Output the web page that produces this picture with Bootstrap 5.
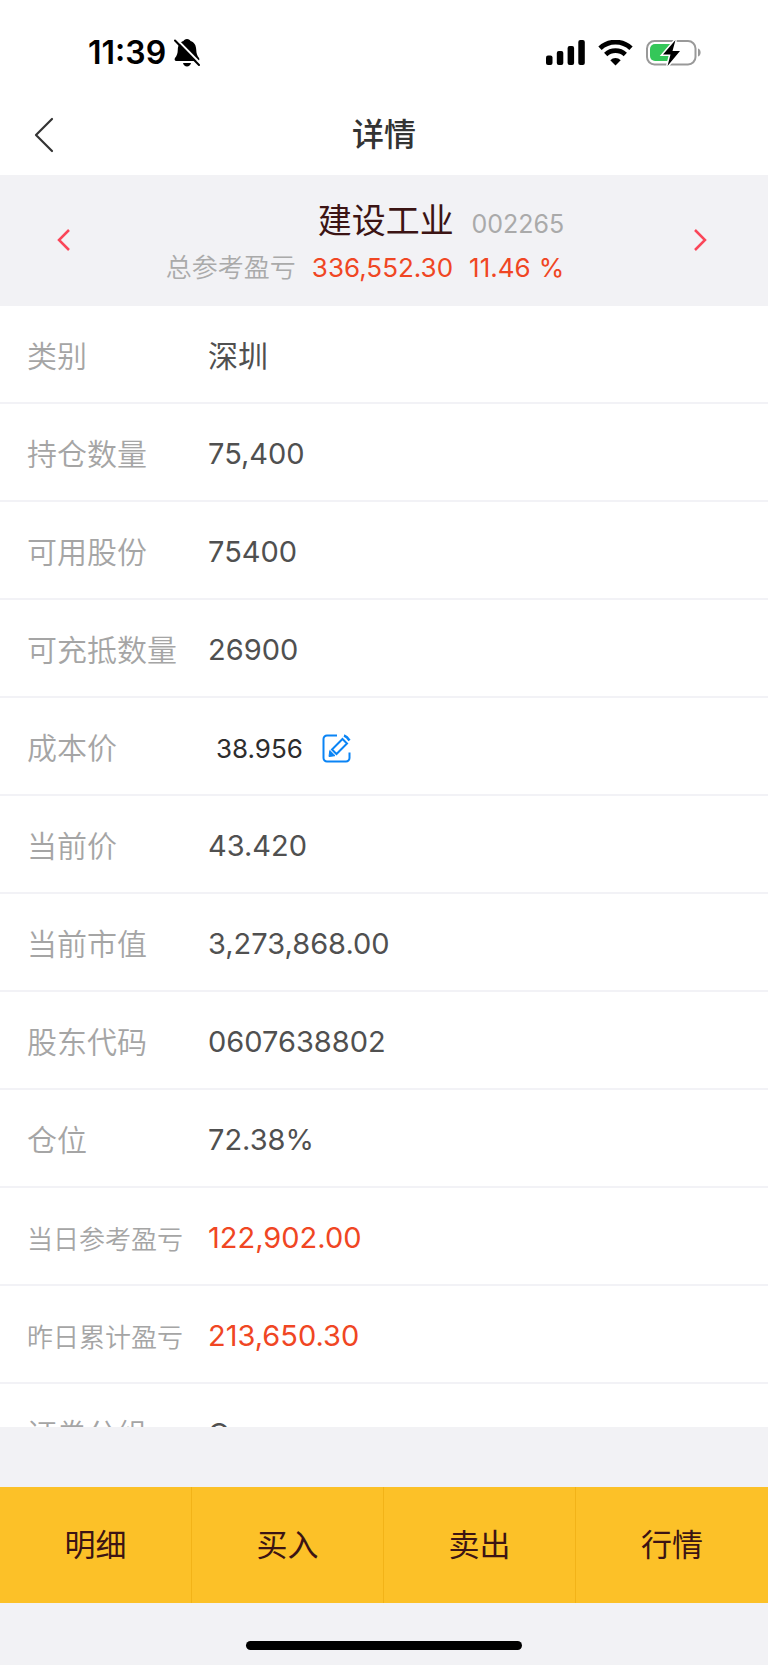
<!DOCTYPE html>
<html lang="zh-CN">
<head>
<meta charset="utf-8">
<meta name="viewport" content="width=device-width, initial-scale=1">
<title>详情</title>
<link href="https://cdn.jsdelivr.net/npm/bootstrap@5.3.0/dist/css/bootstrap.min.css" rel="stylesheet">
<style>
  body { font-family: Inter, "Noto Sans CJK SC", sans-serif; background: #f2f2f5; color: #505050; }
  .status-bar { height: 104px; padding: 1px 66px 0 88px; color: #000; }
  .status-icons { gap: 13px; }
  .clock { font-size: 32px; line-height: 40px; font-weight: 600; }
  .title-bar { height: 71px; padding-bottom: 9px; color: #333; }
  .title-bar h1 { font-size: 32px; line-height: 40px; font-weight: 500; }
  .back { width: 88px; }
  .summary { height: 131px; padding-bottom: 4px; }
  .summary-text { padding: 12px 38px 0 0; }
  .step { width: 128px; color: #fa4659; }
  .stock-name { font-size: 34px; line-height: 44px; color: #3c1414; }
  .stock-code { font-size: 25px; color: #aaa; margin-left: 8px; }
  .total { font-size: 26px; line-height: 44px; color: #f04623; }
  .total-label { font-size: 26px; color: #aaa; font-weight: 350; }
  .details { min-height: 0; overflow-y: auto; scrollbar-width: none; }
  .details::-webkit-scrollbar { display: none; }
  .detail-row { height: 98px; padding: 4px 0 0 27px; border-bottom: 2px solid #f2f2f6; }
  .detail-row dt { width: 181px; font-size: 30px; font-weight: 350; color: #a5a5a5; }
  .detail-row dt.long-label { font-size: 26px; padding-top: 2px; }
  .detail-row dd { font-size: 29px; }
  .detail-row dd.market { font-size: 30px; }
  .detail-row dd.profit { color: #f04623; }
  .cost { width: 106px; font-size: 26px; color: #2d2d2d; margin-left: 8px; }
  .gap-strip { height: 60px; }
  .actions { height: 116px; background: #fcc128; }
  .actions .btn { font-size: 31px; color: #3c1414; border-right: 1px solid #f2b318; }
  .actions .btn:last-child { border-right: 0; }
  .home-area { height: 62px; padding-top: 38px; }
  .home-indicator { width: 36%; height: 9px; background: #000; }
</style>
</head>
<body class="d-flex flex-column vh-100 overflow-hidden">
  <header class="bg-white flex-shrink-0">
    <div class="status-bar d-flex align-items-center justify-content-between">
      <div class="d-flex align-items-center gap-2">
        <span class="clock">11:39</span>
        <svg width="26" height="28" viewBox="0 0 26 28" aria-label="静音"><path d="M13 0c2 0 3 1 3.500 2 4 1.200 5.500 4.500 5.700 8.500.2 4 .8 6 2.800 8.500.8 1.300.3 3-1.300 3H2.300C.7 22 .2 20.500 1 19c2-2.400 2.700-4.500 2.800-8.500C4 6.500 5.500 3.200 9.500 2 10 1 11 0 13 0zM9 24h8c-.5 2-2 3.500-4 3.500S9.500 26 9 24z"/><path d="M2.500 0L27 25" stroke="#fff" stroke-width="2"/><path d="M1 1.500L25 26" stroke="#000" stroke-width="2" stroke-linecap="round"/></svg>
      </div>
      <div class="status-icons d-flex align-items-center">
        <svg width="39" height="26" viewBox="0 0 39 26" aria-label="信号"><rect y="15.500" width="6.500" height="9.500" rx="2"/><rect x="10.800" y="11" width="6.500" height="14" rx="2"/><rect x="21.600" y="6" width="6.500" height="19" rx="2"/><rect x="32.300" width="6.500" height="25" rx="2"/></svg>
        <svg width="35" height="26" viewBox="0 0 35 26" aria-label="无线网络"><path d="M2 8.300a22.500 22.500 0 0 1 31 0M7.700 14.500a14.500 14.500 0 0 1 19.600 0" fill="none" stroke="#000" stroke-width="4.800"/><path d="M17.500 25.500l-5.200-5.300a7.500 7.500 0 0 1 10.400 0z"/></svg>
        <svg width="56" height="28" viewBox="0 0 56 28" aria-label="充电中"><rect x="1" y="2" width="48.500" height="23.500" rx="7.500" fill="none" stroke="#999" stroke-width="2"/><path d="M52 9.500c3.500 1 3.500 7 0 8z" fill="#999"/><path d="M9 5h15v17H9a5 5 0 0 1-5-5v-7a5 5 0 0 1 5-5z" fill="#34c759"/><path d="M29.500 1L17 15.500h7.500L21.500 27 34 12h-7.500z" stroke="#fff" stroke-width="3" paint-order="stroke"/></svg>
      </div>
    </div>
    <nav class="title-bar d-flex align-items-center">
      <button type="button" class="back btn p-0 border-0" aria-label="返回"><svg width="20" height="36" viewBox="0 0 20 36" fill="none" stroke="#333" stroke-width="2.200" stroke-linecap="round" stroke-linejoin="round"><path d="M18 2L2 18l16 16"/></svg></button>
      <h1 class="flex-fill text-center m-0">详情</h1>
      <span class="back"></span>
    </nav>
  </header>

  <section class="summary d-flex align-items-center flex-shrink-0">
    <button type="button" class="step btn p-0 border-0" aria-label="上一个"><svg width="14" height="22" viewBox="0 0 14 22" fill="none" stroke="#fa4659" stroke-width="2.500"><path d="M12 1L2 11l10 10"/></svg></button>
    <div class="summary-text flex-fill d-flex justify-content-center">
      <div class="text-end">
        <div class="stock-name">建设工业 <span class="stock-code">002265</span></div>
        <div class="total"><span class="total-label me-3">总参考盈亏</span><span class="me-3">336,552.30</span><span>11.46</span><span class="ms-2">%</span></div>
      </div>
    </div>
    <button type="button" class="step btn p-0 pe-2 border-0" aria-label="下一个"><svg width="14" height="22" viewBox="0 0 14 22" fill="none" stroke="#fa4659" stroke-width="2.500"><path d="M2 1l10 10L2 21"/></svg></button>
  </section>

  <dl class="details bg-white flex-fill m-0">
    <div class="detail-row d-flex align-items-center"><dt>类别</dt><dd class="market m-0">深圳</dd></div>
    <div class="detail-row d-flex align-items-center"><dt>持仓数量</dt><dd class="m-0">75,400</dd></div>
    <div class="detail-row d-flex align-items-center"><dt>可用股份</dt><dd class="m-0">75400</dd></div>
    <div class="detail-row d-flex align-items-center"><dt>可充抵数量</dt><dd class="m-0">26900</dd></div>
    <div class="detail-row d-flex align-items-center"><dt><label for="cost">成本价</label></dt><dd class="m-0 d-flex align-items-center"><input id="cost" class="cost border-0 bg-transparent p-0" type="text" value="38.956"><button type="button" class="btn p-0 border-0 d-flex" aria-label="编辑成本价"><svg width="29" height="29" viewBox="0 0 29 29" fill="none" stroke="#0a84f5" stroke-width="2"><path d="M15 1.500H5A3.500 3.500 0 0 0 1.500 5v19A3.500 3.500 0 0 0 5 27.500h19a3.500 3.500 0 0 0 3.500-3.500v-5.500"/><path d="M20.500 5l4.500 4.500L14.500 20 10 15.500z"/><path d="M22 1.500q3 1 5.500 5" stroke-width="2.500"/><path d="M7.800 16.500L7 22.500l6-.8z" fill="#0a84f5" stroke-width="1"/></svg></button></dd></div>
    <div class="detail-row d-flex align-items-center"><dt>当前价</dt><dd class="m-0">43.420</dd></div>
    <div class="detail-row d-flex align-items-center"><dt>当前市值</dt><dd class="m-0">3,273,868.00</dd></div>
    <div class="detail-row d-flex align-items-center"><dt>股东代码</dt><dd class="m-0">0607638802</dd></div>
    <div class="detail-row d-flex align-items-center"><dt>仓位</dt><dd class="m-0">72.38%</dd></div>
    <div class="detail-row d-flex align-items-center"><dt class="long-label">当日参考盈亏</dt><dd class="profit m-0">122,902.00</dd></div>
    <div class="detail-row d-flex align-items-center"><dt class="long-label">昨日累计盈亏</dt><dd class="profit m-0">213,650.30</dd></div>
    <div class="detail-row d-flex align-items-center"><dt>证券分组</dt><dd class="m-0">O</dd></div>
  </dl>

  <div class="gap-strip flex-shrink-0"></div>
  <div class="actions d-flex flex-shrink-0">
    <button type="button" class="btn rounded-0 border-start-0 border-top-0 border-bottom-0 p-0 col-3">明细</button>
    <button type="button" class="btn rounded-0 border-start-0 border-top-0 border-bottom-0 p-0 col-3">买入</button>
    <button type="button" class="btn rounded-0 border-start-0 border-top-0 border-bottom-0 p-0 col-3">卖出</button>
    <button type="button" class="btn rounded-0 border-start-0 border-top-0 border-bottom-0 p-0 col-3">行情</button>
  </div>
  <div class="home-area flex-shrink-0"><div class="home-indicator rounded-pill mx-auto"></div></div>
  <script src="https://cdn.jsdelivr.net/npm/bootstrap@5.3.0/dist/js/bootstrap.bundle.min.js"></script>
</body>
</html>
